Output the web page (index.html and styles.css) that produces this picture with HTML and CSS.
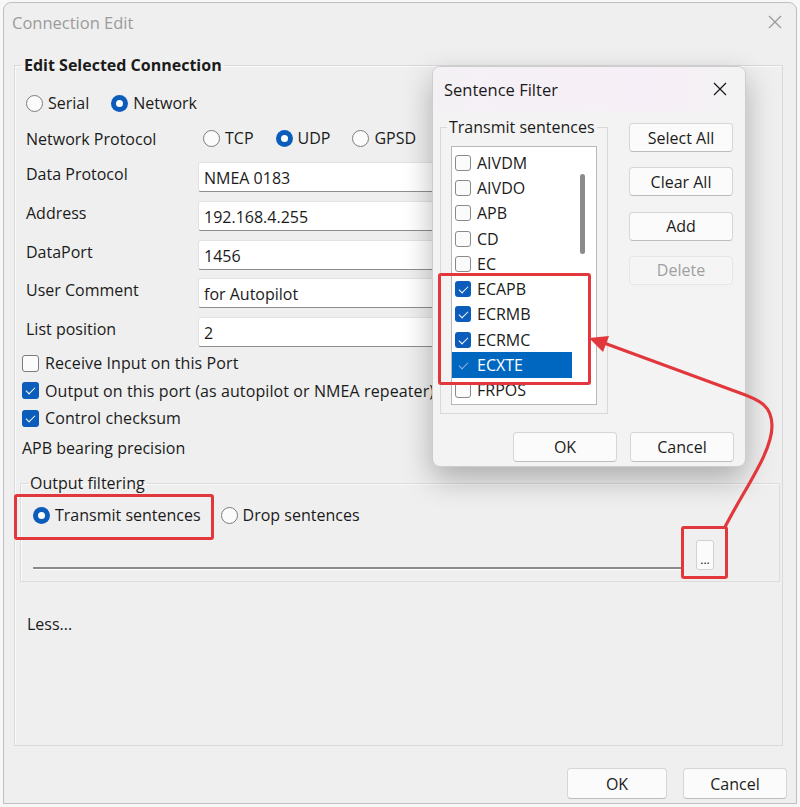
FILE: index.html
```html
<!DOCTYPE html>
<html>
<head>
<meta charset="utf-8">
<link rel="stylesheet" href="styles.css">
</head>
<body>
<div class="stage">
  <div class="window">
    <header class="titlebar">
      <span>Connection Edit</span>
      <svg class="xicon" width="14" height="14" viewBox="0 0 14 14"><path d="M1 1 L13 13 M13 1 L1 13" stroke="#9a9a9a" stroke-width="1.3" fill="none"/></svg>
    </header>
    <fieldset class="panel">
      <legend>Edit Selected Connection</legend>
      <div class="radio-row type-row">
        <label class="radio"><span class="rb"></span>Serial</label>
        <label class="radio"><span class="rb on"></span>Network</label>
      </div>
      <div class="grid">
        <div class="lbl mid">Network Protocol</div>
        <div class="radio-row proto-row">
          <label class="radio"><span class="rb"></span>TCP</label>
          <label class="radio"><span class="rb on"></span>UDP</label>
          <label class="radio"><span class="rb"></span>GPSD</label>
        </div>
        <div class="lbl">Data Protocol</div><div class="field">NMEA 0183</div>
        <div class="lbl">Address</div><div class="field">192.168.4.255</div>
        <div class="lbl">DataPort</div><div class="field">1456</div>
        <div class="lbl">User Comment</div><div class="field">for Autopilot</div>
        <div class="lbl">List position</div><div class="field">2</div>
      </div>
      <div class="checks">
        <label class="check"><span class="cb"></span>Receive Input on this Port</label>
        <label class="check"><span class="cb on"></span>Output on this port (as autopilot or NMEA repeater)</label>
        <label class="check"><span class="cb on"></span>Control checksum</label>
      </div>
      <div class="apb">APB bearing precision</div>
      <fieldset class="filter">
        <legend>Output filtering</legend>
        <div class="radio-row filter-radios">
          <label class="radio"><span class="rb on"></span>Transmit sentences</label>
          <label class="radio"><span class="rb"></span>Drop sentences</label>
        </div>
        <div class="filter-line">
          <div class="line"></div>
          <button class="dots">...</button>
        </div>
      </fieldset>
      <div class="less">Less...</div>
    </fieldset>
    <footer class="footer">
      <button class="btn ok">OK</button>
      <button class="btn cancel">Cancel</button>
    </footer>
  </div>

  <div class="dialog">
    <div class="dlg-title">
      <span>Sentence Filter</span>
      <svg width="14" height="14" viewBox="0 0 14 14"><path d="M1 1 L13 13 M13 1 L1 13" stroke="#1b1b1b" stroke-width="1.3" fill="none"/></svg>
    </div>
    <div class="dlg-body">
      <fieldset class="group">
        <legend>Transmit sentences</legend>
        <div class="list">
          <div class="items">
            <div class="item"><span class="cb sm"></span>AIVDM</div>
            <div class="item"><span class="cb sm"></span>AIVDO</div>
            <div class="item"><span class="cb sm"></span>APB</div>
            <div class="item"><span class="cb sm"></span>CD</div>
            <div class="item"><span class="cb sm"></span>EC</div>
            <div class="item"><span class="cb sm on"></span>ECAPB</div>
            <div class="item"><span class="cb sm on"></span>ECRMB</div>
            <div class="item"><span class="cb sm on"></span>ECRMC</div>
            <div class="item sel"><span class="cb sm on ghost"></span>ECXTE</div>
            <div class="item"><span class="cb sm"></span>FRPOS</div>
          </div>
          <div class="track"><div class="thumb"></div></div>
        </div>
      </fieldset>
      <div class="side">
        <button class="btn sbtn">Select All</button>
        <button class="btn sbtn">Clear All</button>
        <button class="btn sbtn">Add</button>
        <button class="btn sbtn disabled">Delete</button>
      </div>
    </div>
    <div class="dlg-foot">
      <button class="btn dbtn">OK</button>
      <button class="btn dbtn">Cancel</button>
    </div>
  </div>

  <div class="mark m-transmit"></div>
  <div class="mark m-list"></div>
  <div class="mark m-dots"></div>
  <svg class="arrow" width="800" height="807" viewBox="0 0 800 807">
    <path d="M725 527 C745 488, 772 452, 772 426 C772 406, 760 400, 740 393 L604 343" stroke="#e2383d" stroke-width="3.2" fill="none" stroke-linecap="round"/>
    <polygon points="589,338 609,336 603,352" fill="#e2383d"/>
  </svg>
</div>
</body>
</html>
```

FILE: styles.css
```css
* { box-sizing: border-box; }

body {
  margin: 0;
  font-family: "Open Sans", "Noto Sans", sans-serif;
  font-size: 16px;
  color: #1b1b1b;
  background: #ffffff;
}

.stage {
  position: relative;
  width: 800px;
  height: 807px;
  overflow: hidden;
  background: #f7f7f7;
}

.window {
  margin: 2px 3px 0 3px;
  height: 802px;
  border: 1px solid #bfbfbf;
  border-radius: 8px 8px 0 0;
  background: #efefef;
  display: flex;
  flex-direction: column;
}

.titlebar {
  height: 38px;
  display: flex;
  align-items: center;
  justify-content: space-between;
  padding: 0 14px 0 8px;
  color: #9b9b9b;
  font-size: 16.5px;
}

.panel {
  margin: 13px 13px 0 10px;
  padding: 0 3px 0 7px;
  height: 692px;
  min-width: 0;
  border: 1px solid #d9d9d9;
  box-shadow: inset 1px 1px 0 #fafafa;
}

.panel > legend {
  font-weight: 700;
  font-size: 16px;
  line-height: 22px;
  padding: 0 2px;
}

.radio-row {
  display: flex;
  align-items: center;
  height: 28px;
  gap: 22px;
}

.radio {
  display: flex;
  align-items: center;
  gap: 5px;
  white-space: nowrap;
}

.rb {
  width: 17px;
  height: 17px;
  border-radius: 50%;
  border: 1px solid #7c7c7c;
  background: #fbfbfb;
  display: inline-flex;
  align-items: center;
  justify-content: center;
  flex: none;
}

.rb.on {
  border: none;
  background: #0c5dbb;
}

.rb.on::after {
  content: "";
  width: 7px;
  height: 7px;
  border-radius: 50%;
  background: #ffffff;
}

.type-row {
  margin: 13px 0 0 4px;
  gap: 22px;
}

.grid {
  display: grid;
  grid-template-columns: 172px 545px;
  row-gap: 8.75px;
  margin: 7px 0 0 4px;
}

.proto-row {
  margin: 0 0 1.25px 5px;
}

.lbl {
  line-height: 22px;
  padding-top: 1px;
  white-space: nowrap;
}

.lbl.mid {
  align-self: center;
  padding-top: 0;
}

.field {
  height: 30px;
  background: #ffffff;
  border: 1px solid #e2e2e2;
  border-bottom-color: #8d8d8d;
  border-radius: 3px;
  padding: 2px 0 0 5px;
  display: flex;
  align-items: center;
}

.checks {
  margin-top: 2.5px;
}

.check {
  display: flex;
  align-items: center;
  gap: 6px;
  height: 27.5px;
  white-space: nowrap;
  letter-spacing: 0.1px;
}

.cb {
  position: relative;
  width: 17px;
  height: 17px;
  border: 1px solid #7c7c7c;
  border-radius: 3px;
  background: #fbfbfb;
  flex: none;
}

.cb.on {
  border: none;
  background: #0c5dbb;
}

.cb.on::after {
  content: "";
  position: absolute;
  left: 6px;
  top: 3px;
  width: 4px;
  height: 8px;
  border: solid #ffffff;
  border-width: 0 1.6px 1.6px 0;
  transform: rotate(45deg);
}

.cb.sm {
  width: 16px;
  height: 16px;
  border-color: #8a8a8a;
}

.cb.sm.on {
  border: none;
}

.cb.ghost {
  background: transparent;
}

.cb.ghost::after {
  border-color: #8fb7e6;
}

.apb {
  height: 30px;
  display: flex;
  align-items: center;
  margin-top: 1px;
}

.filter {
  margin: 9px 0 0 -2px;
  width: 760px;
  height: 110px;
  padding: 0 0 0 7px;
  border: 1px solid #dcdcdc;
  box-shadow: inset 1px 1px 0 #fafafa;
}

.filter > legend {
  line-height: 22px;
  padding: 0 2px;
}

.filter-radios {
  margin: 7px 0 0 5px;
  gap: 20px;
}

.filter-line {
  display: flex;
  align-items: flex-end;
  margin: 11px 0 0 5px;
}

.line {
  width: 651px;
  height: 2px;
  background: #8a8a8a;
  margin-bottom: 1px;
  box-shadow: 0 1px 0 #ffffff;
}

.dots {
  width: 18px;
  height: 30px;
  margin-left: 12px;
  background: #fbfbfb;
  border: 1px solid #d2d2d2;
  border-radius: 3px;
  font: 12px "Open Sans", sans-serif;
  line-height: 1;
  padding: 10px 0 0 0;
  color: #1b1b1b;
}

.less {
  margin: 31px 0 0 5px;
  line-height: 22px;
}

.footer {
  display: flex;
  justify-content: flex-end;
  gap: 16px;
  padding: 22px 9px 0 0;
}

.btn {
  height: 31px;
  background: #fbfbfb;
  border: 1px solid #d6d6d6;
  border-bottom-color: #bdbdbd;
  border-radius: 4px;
  font-family: inherit;
  font-size: 16px;
  color: #1b1b1b;
  padding: 0;
}

.ok { width: 100px; }
.cancel { width: 104px; }

/* Sentence filter dialog */
.dialog {
  position: absolute;
  left: 432px;
  top: 66px;
  width: 314px;
  height: 401px;
  background: #f3f3f3;
  border: 1px solid #cdcdcd;
  border-radius: 8px;
  box-shadow: 0 12px 30px rgba(0, 0, 0, 0.28);
  overflow: hidden;
}

.dlg-title {
  height: 44px;
  display: flex;
  align-items: center;
  justify-content: space-between;
  padding: 0 18px 0 11px;
  background: linear-gradient(90deg, #f4f1f5 0%, #f7eff7 70%, #f3f3f3 100%);
  font-size: 16.5px;
}

.dlg-body {
  display: flex;
  padding: 5px 0 0 7px;
}

.group {
  margin: 0;
  width: 168px;
  height: 298px;
  border: 1px solid #d8d8d8;
  padding: 0 0 0 10px;
  min-width: 0;
}

.group > legend {
  line-height: 22px;
  padding: 0 2px;
  margin-left: -4px;
}

.list {
  margin-top: 8px;
  width: 146px;
  height: 259px;
  background: #ffffff;
  border: 1px solid #b8b8b8;
  display: flex;
  overflow: hidden;
}

.items {
  width: 120px;
  padding-top: 3px;
  flex: none;
}

.item {
  height: 25.3px;
  display: flex;
  align-items: center;
  gap: 6px;
  padding-left: 3px;
}

.item.sel {
  background: #0067c0;
  color: #ffffff;
}

.track {
  flex: 1;
}

.thumb {
  width: 5px;
  height: 80px;
  margin: 27px 0 0 8px;
  background: #8b8b8b;
  border-radius: 3px;
}

.side {
  display: flex;
  flex-direction: column;
  gap: 15.3px;
  margin: 7px 0 0 21px;
  width: 104px;
}

.sbtn {
  height: 29px;
  width: 104px;
}

.sbtn.disabled {
  background: #f5f5f5;
  border-color: #e6e6e6;
  color: #a0a0a0;
}

.dlg-foot {
  display: flex;
  justify-content: flex-end;
  gap: 13px;
  padding: 18px 11px 0 0;
}

.dbtn {
  width: 104px;
  height: 30px;
}

/* annotations */
.mark {
  position: absolute;
  border: 3px solid #e2383d;
  border-radius: 3px;
}

.m-transmit { left: 14px; top: 494px; width: 200px; height: 46px; }
.m-list { left: 438px; top: 273px; width: 153px; height: 112px; }
.m-dots { left: 681px; top: 526px; width: 47px; height: 53px; }

.arrow {
  position: absolute;
  left: 0;
  top: 0;
  pointer-events: none;
}
```
